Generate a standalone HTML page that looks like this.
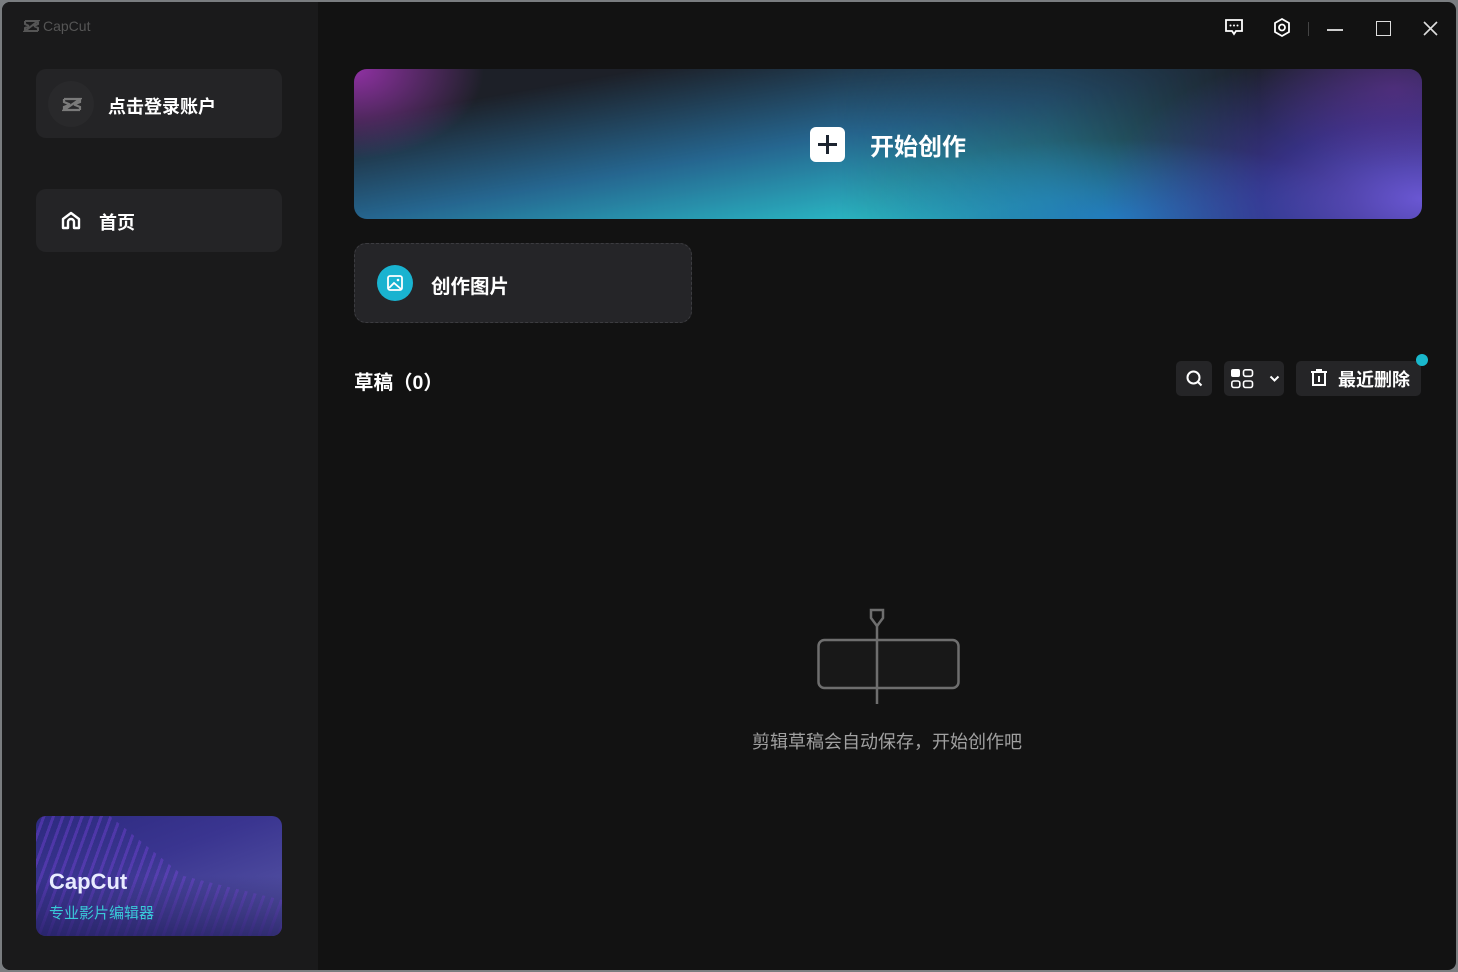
<!DOCTYPE html>
<html><head><meta charset="utf-8"><style>
*{margin:0;padding:0;box-sizing:border-box}
body{width:1458px;height:972px;background:#7a7d80;font-family:"Liberation Sans","Noto Sans CJK SC",sans-serif;overflow:hidden;position:relative}
.win{position:absolute;left:2px;top:2px;width:1454px;height:968px;background:#121212;border-radius:8px;overflow:hidden}
.side{position:absolute;left:0;top:0;width:316px;height:968px;background:#1a1a1b}
.abs{position:absolute}
.card{background:#242426;border-radius:10px}
.t{color:#fff;font-weight:bold}
</style></head><body><div class="win">
<div class="side">
 <div class="abs" style="left:21px;top:16px;color:#555;font-size:14px;display:flex;align-items:center;gap:3px">
  <svg width="17" height="14" viewBox="0 0 17 14"><path d="M2 2h13L2 12h13M2 2v3l4 2M15 2v3l-4 2M2 12V9l4-2M15 12V9l-4-2" stroke="#555" stroke-width="2" fill="none"/></svg>CapCut</div>
 <div class="abs card" style="left:34px;top:67px;width:246px;height:69px">
  <div class="abs" style="left:12px;top:12px;width:46px;height:46px;border-radius:50%;background:#29292b"></div>
  <svg class="abs" style="left:26px;top:28px" width="20" height="15" viewBox="0 0 20 15"><path d="M2 2h16L2 13h16M2 2v3l6 2.5M18 2v3l-6 2.5M2 13v-3l6-2.5M18 13v-3l-6-2.5" stroke="#7a7a7a" stroke-width="2.2" fill="none"/></svg>
  <div class="abs t" style="left:72px;top:24px;font-size:18px">点击登录账户</div>
 </div>
 <div class="abs card" style="left:34px;top:187px;width:246px;height:63px">
  <svg class="abs" style="left:25px;top:22px" width="20" height="19" viewBox="0 0 20 19"><path d="M2 17V8l8-6 8 6v9h-5v-6a3 3 0 0 0-6 0v6z" stroke="#fff" stroke-width="2.4" fill="none" stroke-linejoin="round"/></svg>
  <div class="abs t" style="left:63px;top:20px;font-size:18px">首页</div>
 </div>
 <div class="abs" style="left:34px;top:814px;width:246px;height:120px;border-radius:10px;overflow:hidden;background:linear-gradient(160deg,#2d2a80 0%,#3a3590 40%,#5b5aa8 100%)">
  <div class="abs" style="left:0;top:0;width:246px;height:120px;background:repeating-linear-gradient(110deg,rgba(120,60,220,.0) 0 6px,rgba(130,70,230,.35) 6px 9px);clip-path:polygon(0 0,30% 0,60% 50%,100% 70%,100% 100%,0 100%)"></div>
  <div class="abs" style="left:0;top:60px;width:246px;height:60px;background:linear-gradient(180deg,rgba(30,25,90,0),rgba(30,25,90,.7))"></div>
  <div class="abs t" style="left:13px;top:53px;font-size:22px;color:#e8ecff">CapCut</div>
  <div class="abs" style="left:13px;top:86px;font-size:15px;color:#39c8d8">专业影片编辑器</div>
 </div>
</div>
<svg class="abs" style="left:1222px;top:16px" width="20" height="19" viewBox="0 0 20 19"><path d="M2 2h16v11h-6l-2 3-2-3H2z" stroke="#fff" stroke-width="1.8" fill="none"/><circle cx="6.5" cy="7.5" r="1" fill="#fff"/><circle cx="10" cy="7.5" r="1" fill="#fff"/><circle cx="13.5" cy="7.5" r="1" fill="#fff"/></svg>
<svg class="abs" style="left:1270px;top:15px" width="20" height="21" viewBox="0 0 20 21"><path d="M10 2l7 4v9l-7 4-7-4V6z" stroke="#fff" stroke-width="1.8" fill="none"/><circle cx="10" cy="10.5" r="3" stroke="#fff" stroke-width="1.8" fill="none"/></svg>
<div class="abs" style="left:1306px;top:20px;width:1px;height:14px;background:#444"></div>
<div class="abs" style="left:1325px;top:27px;width:16px;height:2px;background:#ccc"></div>
<div class="abs" style="left:1374px;top:19px;width:15px;height:15px;border:1.8px solid #ddd"></div>
<svg class="abs" style="left:1420px;top:18px" width="17" height="17" viewBox="0 0 17 17"><path d="M2 2l13 13M15 2L2 15" stroke="#ddd" stroke-width="1.6"/></svg>
<div class="abs" style="left:352px;top:67px;width:1068px;height:150px;border-radius:13px;overflow:hidden;background:#1d2028">
 <div class="abs" style="inset:0;background:linear-gradient(170deg,rgba(0,0,0,0) 15%,rgba(40,120,170,.8) 45%,#2bc4cc 75%,#2ed2d2 100%);-webkit-mask-image:linear-gradient(90deg,#000 0%,#000 45%,rgba(0,0,0,.6) 65%,rgba(0,0,0,0) 85%);mask-image:linear-gradient(90deg,#000 0%,#000 45%,rgba(0,0,0,.6) 65%,rgba(0,0,0,0) 85%)"></div>
 <div class="abs" style="inset:0;background:radial-gradient(ellipse 250px 80px at 760px 150px,rgba(35,130,210,.8),rgba(0,0,0,0))"></div>
 <div class="abs" style="inset:0;background:radial-gradient(ellipse 320px 160px at 1068px 130px,rgba(110,90,220,.95),rgba(70,60,190,.6) 50%,rgba(40,40,120,0) 100%)"></div>
 <div class="abs" style="inset:0;background:radial-gradient(ellipse 130px 90px at 0 0,rgba(150,50,170,.95),rgba(90,40,120,0) 100%)"></div>
 <div class="abs" style="inset:0;background:radial-gradient(ellipse 140px 80px at 1040px 20px,rgba(110,50,150,.5),rgba(0,0,0,0))"></div>
 <div class="abs" style="left:456px;top:58px;width:35px;height:35px;background:#fff;border-radius:6px"></div>
 <div class="abs" style="left:464px;top:74px;width:19px;height:3px;background:#1c2430"></div>
 <div class="abs" style="left:472px;top:66px;width:3px;height:19px;background:#1c2430"></div>
 <div class="abs t" style="left:516px;top:58px;font-size:24px">开始创作</div>
</div>
<div class="abs" style="left:352px;top:241px;width:338px;height:80px;border-radius:12px;background:#252528;border:1.5px dashed #3c3c40">
 <div class="abs" style="left:22px;top:21px;width:36px;height:36px;border-radius:50%;background:#19b3d0"></div>
 <svg class="abs" style="left:31px;top:30px" width="18" height="18" viewBox="0 0 18 18"><rect x="2" y="2" width="14" height="14" rx="2" stroke="#fff" stroke-width="1.8" fill="none"/><path d="M3 14l5-5 7 6" stroke="#fff" stroke-width="1.8" fill="none"/><circle cx="12" cy="6" r="1.3" fill="#fff"/></svg>
 <div class="abs t" style="left:76px;top:26px;font-size:19.5px">创作图片</div>
</div>
<div class="abs t" style="left:352px;top:364px;font-size:19.5px">草稿（0）</div>
<div class="abs" style="left:1174px;top:359px;width:36px;height:35px;background:#252527;border-radius:5px"></div>
<svg class="abs" style="left:1183px;top:367px" width="19" height="19" viewBox="0 0 19 19"><circle cx="8.5" cy="8.5" r="6" stroke="#fff" stroke-width="2" fill="none"/><path d="M13 13l3.5 3.5" stroke="#fff" stroke-width="2"/></svg>
<div class="abs" style="left:1222px;top:359px;width:60px;height:35px;background:#252527;border-radius:5px"></div>
<svg class="abs" style="left:1228px;top:366px" width="24" height="22" viewBox="0 0 24 22"><rect x="1" y="1" width="9" height="8" rx="2" fill="#fff"/><rect x="13.5" y="1.8" width="9" height="6.5" rx="2" stroke="#fff" stroke-width="1.6" fill="none"/><rect x="1.8" y="13" width="8" height="6.5" rx="2" stroke="#fff" stroke-width="1.6" fill="none"/><rect x="13.5" y="13" width="9" height="6.5" rx="2" stroke="#fff" stroke-width="1.6" fill="none"/></svg>
<svg class="abs" style="left:1267px;top:373px" width="11" height="8" viewBox="0 0 11 8"><path d="M1.5 1.5l4 4 4-4" stroke="#fff" stroke-width="2" fill="none"/></svg>
<div class="abs" style="left:1294px;top:359px;width:125px;height:35px;background:#252527;border-radius:5px"></div>
<svg class="abs" style="left:1307px;top:366px" width="20" height="20" viewBox="0 0 20 20"><path d="M2 4h16M7 2h6M4 4v13h12V4M10 8v6" stroke="#fff" stroke-width="2" fill="none"/></svg>
<div class="abs t" style="left:1336px;top:364px;font-size:18px">最近删除</div>
<div class="abs" style="left:1414px;top:352px;width:12px;height:12px;border-radius:50%;background:#19b8cc"></div>
<svg class="abs" style="left:814px;top:604px" width="148" height="100" viewBox="0 0 148 100"><rect x="2.5" y="34" width="140" height="48" rx="6" stroke="#6e6e6e" stroke-width="2.5" fill="#181818"/><path d="M55 4h12v8l-6 8-6-8z" stroke="#6e6e6e" stroke-width="2.5" fill="none"/><path d="M61 20v78" stroke="#6e6e6e" stroke-width="2.5"/></svg>
<div class="abs" style="left:750px;top:726px;font-size:18px;color:#a0a0a0">剪辑草稿会自动保存，开始创作吧</div>
</div></body></html>
